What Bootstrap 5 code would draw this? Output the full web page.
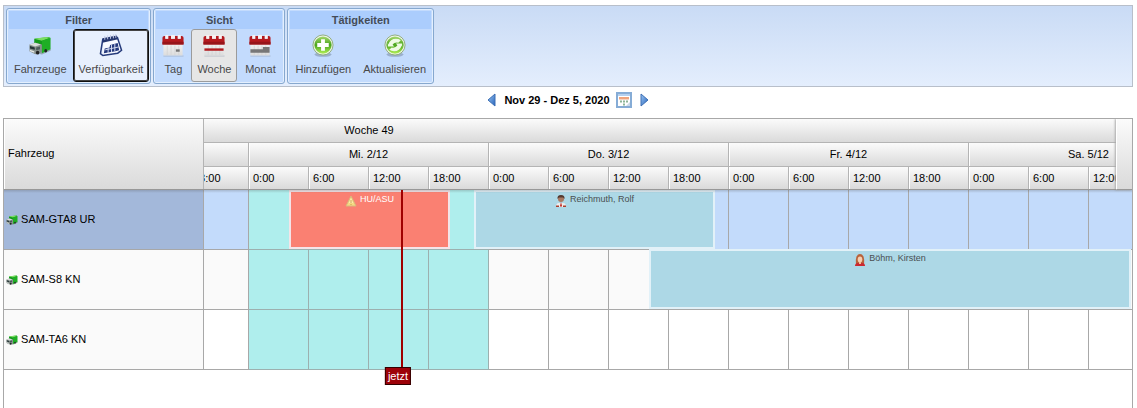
<!DOCTYPE html>
<html lang="de">
<head>
<meta charset="utf-8">
<meta name="viewport" content="width=device-width, initial-scale=1">
<title>Fahrzeugplanung</title>
<link href="https://cdn.jsdelivr.net/npm/bootstrap@5.3.0/dist/css/bootstrap.min.css" rel="stylesheet">
<style>
  :root { --line: #a8a8a8; --steel: #86a8cf; }
  body { font: 11px/16px "Liberation Sans", Arial, sans-serif; color: #000; background: #fff; }
  .page { padding: 0 4px 0 3px; }
  .defs { width: 0; height: 0; }
  .ribbon { background: linear-gradient(#c9dbf5, #e4eefd); border: 1px solid #b8bfca; margin-top: 5px; padding: 2px; gap: 2px; }
  .ribbon-group { border: 1px solid var(--steel); border-radius: 3px; background: #c3dbfd; box-shadow: inset 0 0 0 1px #e3effe; padding: 2px 1px 1px; height: 76px; }
  .ribbon-title { background: #abcdfd; color: #444c58; font-size: 11px; line-height: 18px; font-weight: bold; margin: 0 1px; text-align: center; }
  .tool { --bs-btn-color: #484848; --bs-btn-hover-color: #333; --bs-btn-border-radius: 3px; --bs-btn-font-size: 11px; --bs-btn-line-height: 16px; --bs-btn-padding-x: 5px; --bs-btn-padding-y: 4px; height: 53px; }
  .tool:last-child { min-width: 46px; }
  .tool svg { width: 24px; height: 24px; margin-bottom: 4px; }
  .tool.focused { background: #e8f0fd; border: 1px solid #101010; box-shadow: inset 0 0 0 1px #444; }
  .tool.chosen { background: #e6e6e6; border-color: #9b9b9b; }
  .period { height: 31px; gap: 6px; font-weight: bold; padding-bottom: 6px; }
  .period .btn { --bs-btn-padding-x: 0; --bs-btn-padding-y: 0; --bs-btn-border-width: 0; display: flex; }
  .planner { border: 1px solid var(--line); border-bottom: 0; }
  .planner table { border-collapse: separate; border-spacing: 0; table-layout: fixed; }
  .planner th { background: linear-gradient(#fbfbfb, #dadada); font-weight: normal; height: 24px; padding: 0 0 2px; text-align: center; border-right: 1px solid #b4b4b4; border-bottom: 1px solid #b4b4b4; box-shadow: inset 1px 0 #fff; }
  .planner td { height: 60px; border-right: 1px solid var(--line); border-bottom: 1px solid var(--line); padding: 0 0 2px; }
  .planner .hours th { height: 23px; padding: 0 0 0 4px; text-align: left; }
  .vehicles { width: 200px; }
  .planner .vehicles th { height: 71px; text-align: left; padding-left: 4px; }
  .planner .vehicles td { background: #fafafa; padding-left: 2px; }
  .planner .vehicles .current td { background: #a3b8da; }
  .vehicles svg { width: 12px; height: 12px; }
  .timeline { min-width: 0; }
  .hour-track { margin-left: -15px; width: 1020px; }
  .hour-track table { width: 1020px; }
  .current td { background: #c3dbfb; }
  .alternate td { background: #fafafa; }
  .hour-track td.today, .hour-track .current td.today { background: #afeeed; border-color: #9cb0af; }
  .head-shadow { top: 70px; left: 0; right: 0; height: 4px; background: linear-gradient(rgba(80,80,80,.32), rgba(80,80,80,0)); z-index: 2; }
  .booking { height: 60px; border: 2px solid #e2f1f8; background: #add8e6; color: #4a4f52; font-size: 9px; line-height: 12px; gap: 3px; padding-top: 1px; overflow: hidden; }
  .booking.service { background: #fa8072; color: #fff; border-color: #f4e4e8; }
  .booking svg { width: 12px; height: 12px; margin-top: 2px; }
  .lane-1 { top: 71px; height: 59px; } .lane-2 { top: 130px; }
  .now-line { top: 71px; width: 2px; height: 178px; background: #a00000; z-index: 3; }
  .now-tag { top: 248px; background: #9d0209; color: #fff; border: 1px solid #300; line-height: 16px; padding: 0 2px; transform: translateX(-50%); z-index: 3; }
  .gutter { top: 0; right: 0; width: 16px; height: 71px; background: linear-gradient(#fbfbfb, #dadada); border-left: 1px solid #fff; border-bottom: 1px solid #b4b4b4; box-shadow: -1px 0 2px #aaa; }
</style>
</head>
<body>
<svg class="defs position-absolute" aria-hidden="true">
  <defs>
    <linearGradient id="leaf" x1="0" y1="0" x2="0" y2="1"><stop offset="0" stop-color="#a6d86c"/><stop offset=".5" stop-color="#4aa51d"/><stop offset="1" stop-color="#b0ee55"/></linearGradient>
    <linearGradient id="blueArrow" x1="0" y1="0" x2="1" y2="1"><stop stop-color="#9cc6f3"/><stop offset="1" stop-color="#2563ba"/></linearGradient>
    <linearGradient id="paper" x1="0" y1="0" x2="0" y2="1"><stop stop-color="#f2f2f2"/><stop offset="1" stop-color="#dcdcdc"/></linearGradient>
  </defs>
  <symbol id="truck" viewBox="0 0 24 24">
    <path d="M2 18.500l12 3 9-4v-2L3 16z" fill="#69746d" opacity=".5"/>
    <path d="M6 5l16-2v12l-8 4-8-3z" fill="#139a1c"/><path d="M6 5l12-2 5 1-9 3z" fill="#7add62"/><path d="M14 7l9-3v12l-9 4z" fill="#1fae25"/>
    <path d="M1 11l6-2 7 2v8l-7 2-6-3z" fill="#87918d"/><path d="M1 11l6-2 6 2-6 2z" fill="#d9dedb"/><path d="M1.500 12.500l5 1.500v2.500l-5-1.500z" fill="#263638"/><path d="M8 14l4-1v3l-4 1z" fill="#4b5b5b"/><path d="M1.500 16.500l4.500 1.500v1.500L1.500 18z" fill="#e5e8e5"/>
    <ellipse cx="9.500" cy="19.500" rx="1.800" ry="2" fill="#222"/><ellipse cx="18" cy="17.500" rx="1.500" ry="1.800" fill="#222"/>
  </symbol>
  <symbol id="sheet" viewBox="0 0 24 24">
    <path d="M2 23h21" stroke="#8c98a8" opacity=".5"/><path d="M2 10h20v12.500H2z" fill="url(#paper)"/><path d="M6 12v10M10 12v10M14 12v10M18 12v10" stroke="#d0d0d0" stroke-width=".7"/>
    <path d="M1 4q0-2 2-2h1v3h3V2h3v3h4V2h3v3h3V2h1q2 0 2 2v7H1z" fill="#b51a1f"/><path d="M1 8h22v3H1z" fill="#97151a"/><path d="M4 1h3v4H4zM10 1h4v4h-4zM17 1h3v4h-3z" fill="#f8f1f1"/>
  </symbol>
  <symbol id="orb" viewBox="0 0 24 24">
    <ellipse cx="12" cy="21.500" rx="9" ry="2.300" fill="#71849b" opacity=".5"/><circle cx="12" cy="11.500" r="10.500" fill="#eef4e9" stroke="#8fab79"/><circle cx="12" cy="11.500" r="9" fill="url(#leaf)"/>
  </symbol>
</svg>

<div class="page min-vh-100 d-flex flex-column overflow-hidden">
  <div class="ribbon d-flex" role="toolbar" aria-label="Planung">
    <section class="ribbon-group">
      <h2 class="ribbon-title">Filter</h2>
      <div class="d-flex">
        <button type="button" class="btn tool d-flex flex-column align-items-center"><svg><use href="#truck"/></svg>Fahrzeuge</button>
        <button type="button" class="btn tool focused d-flex flex-column align-items-center"><svg viewBox="0 0 24 24"><path d="M4 6l14-4 4 15-4 4-14 1z" fill="#f8faff"/><path d="M3 4.500L18 1.500l1.500 4L3 9z" fill="#27386f"/><path d="M3.500 5L1 20.500l2.500 2L19 20l4-3-4.500-14" fill="none" stroke="#263b7b" stroke-width="1.600"/><path d="M5.500 2v4M8.500 1.500v4M11.500 1v4M14.500 .500v4M17 0v4" stroke="#c4cce5"/><path d="M11 11.500l8-2 1.500 7.500-4 1-12 2 1-5 5-1z" fill="#24387c"/><path d="M6 16.500l14-3M12.500 11v8M16 10v8M9 14v6" stroke="#dbe2f5"/></svg>Verfügbarkeit</button>
      </div>
    </section>
    <section class="ribbon-group">
      <h2 class="ribbon-title">Sicht</h2>
      <div class="d-flex">
        <button type="button" class="btn tool d-flex flex-column align-items-center"><svg viewBox="0 0 24 24"><use href="#sheet"/><path d="M15 16h4v2.500h-4z" fill="#777"/></svg>Tag</button>
        <button type="button" class="btn tool chosen d-flex flex-column align-items-center" aria-pressed="true"><svg viewBox="0 0 24 24"><use href="#sheet"/><path d="M2 15h20v2.500H2z" fill="#b11c20"/></svg>Woche</button>
        <button type="button" class="btn tool d-flex flex-column align-items-center"><svg viewBox="0 0 24 24"><use href="#sheet"/><path d="M2 16h13v-2.500h7v6H2z" fill="#777"/></svg>Monat</button>
      </div>
    </section>
    <section class="ribbon-group">
      <h2 class="ribbon-title">Tätigkeiten</h2>
      <div class="d-flex">
        <button type="button" class="btn tool d-flex flex-column align-items-center"><svg viewBox="0 0 24 24"><use href="#orb"/><path d="M10 5.500h4v4h4v4h-4v4h-4v-4H6v-4h4z" fill="#fff"/></svg>Hinzufügen</button>
        <button type="button" class="btn tool d-flex flex-column align-items-center"><svg viewBox="0 0 24 24"><use href="#orb"/><path d="M5 11q2-6 8-6 3 0 5 1.500L15.500 9q-4-1-6 2l1.500 2H4.500V8.500zM19 12q-2 6-8 6-3 0-5-1.500L8.500 14q4 1 6-2L13 10h6.500v4.500z" fill="#effbe3"/></svg>Aktualisieren</button>
      </div>
    </section>
  </div>

  <nav class="period d-flex align-items-center justify-content-center" aria-label="Zeitraum">
    <button type="button" class="btn" aria-label="Zurück"><svg width="12" height="14" viewBox="0 0 12 14"><path d="M9 1v12L2 7z" fill="url(#blueArrow)" stroke="#3c6eb4"/></svg></button>
    <span>Nov 29 - Dez 5, 2020</span>
    <button type="button" class="btn" aria-label="Datum wählen"><svg width="16" height="16" viewBox="0 0 16 16"><path d="M1 1h14v14H1z" fill="#fff" stroke="#86acd6" stroke-width="2"/><path d="M2 2h12v2H2z" fill="#b5d0ee"/><path d="M3 5h10v2.500H3z" fill="#f0a47c"/><path d="M4 8.500h2v2H4zM7 8.500h2v2H7zM10 8.500h2v2h-2zM7 11.500h2v2H7z" fill="#8db598"/><path d="M10 14l4-4v4z" fill="#cbd8e7"/></svg></button>
    <button type="button" class="btn" aria-label="Weiter"><svg width="12" height="14" viewBox="0 0 12 14"><path d="M3 1v12l7-6z" fill="url(#blueArrow)" stroke="#3c6eb4"/></svg></button>
  </nav>

  <main class="planner d-flex flex-grow-1 position-relative">
    <div class="flex-shrink-0">
      <table class="vehicles">
        <thead><tr><th scope="col">Fahrzeug</th></tr></thead>
        <tbody>
          <tr class="current"><td><svg><use href="#truck"/></svg> SAM-GTA8 UR</td></tr>
          <tr><td><svg><use href="#truck"/></svg> SAM-S8 KN</td></tr>
          <tr><td><svg><use href="#truck"/></svg> SAM-TA6 KN</td></tr>
        </tbody>
      </table>
    </div>
    <div class="timeline flex-grow-1 overflow-hidden position-relative">
      <div class="hour-track position-relative">
        <table>
          <colgroup><col span="17"></colgroup>
          <thead>
            <tr><th colspan="6" class="border-end-0">Woche 49</th><th colspan="11" class="shadow-none"></th></tr>
            <tr><th></th><th colspan="4">Mi. 2/12</th><th colspan="4">Do. 3/12</th><th colspan="4">Fr. 4/12</th><th colspan="4">Sa. 5/12</th></tr>
            <tr class="hours"><th>18:00</th><th>0:00</th><th>6:00</th><th>12:00</th><th>18:00</th><th>0:00</th><th>6:00</th><th>12:00</th><th>18:00</th><th>0:00</th><th>6:00</th><th>12:00</th><th>18:00</th><th>0:00</th><th>6:00</th><th>12:00</th><th></th></tr>
          </thead>
          <tbody>
            <tr class="current"><td></td><td class="today"></td><td class="today"></td><td class="today"></td><td class="today"></td><td></td><td></td><td></td><td></td><td></td><td></td><td></td><td></td><td></td><td></td><td></td><td></td></tr>
            <tr class="alternate"><td></td><td class="today"></td><td class="today"></td><td class="today"></td><td class="today"></td><td></td><td></td><td></td><td></td><td></td><td></td><td></td><td></td><td></td><td></td><td></td><td></td></tr>
            <tr><td></td><td class="today"></td><td class="today"></td><td class="today"></td><td class="today"></td><td></td><td></td><td></td><td></td><td></td><td></td><td></td><td></td><td></td><td></td><td></td><td></td></tr>
          </tbody>
        </table>
        <div class="booking service lane-1 position-absolute d-flex justify-content-center" style="left:100px;width:161px"><svg viewBox="0 0 12 12"><path d="M6 1l5 10H1z" fill="#f5d983" stroke="#d8b87c"/><path d="M6 3l2 5H4z" fill="#fff0b7"/><path d="M6 5v3M6 9v1" stroke="#c9a052"/></svg><span>HU/ASU</span></div>
        <div class="booking lane-1 position-absolute d-flex justify-content-center" style="left:285px;width:241px"><svg viewBox="0 0 12 12"><path d="M1 12q0-4 3-4h4q3 0 3 4z" fill="#eee"/><path d="M1 10.500h3V12H1zM8 10.500h3V12H8z" fill="#a8402f"/><circle cx="6" cy="4" r="3" fill="#a97860"/><path d="M2.500 4Q2 0 6 0t3.500 4L8 2.500H4z" fill="#54392f"/><path d="M6 7l1 4-1 1-1-1z" fill="#c32620"/></svg><span>Reichmuth, Rolf</span></div>
        <div class="booking lane-2 position-absolute d-flex justify-content-center" style="left:460px;width:482px"><svg viewBox="0 0 12 12"><path d="M2 10Q1 0 6 0t4 10z" fill="#b9623a"/><path d="M1 12q0-3 3-3h4q3 0 3 3z" fill="#cb2931"/><ellipse cx="6" cy="5.500" rx="2.300" ry="3" fill="#f6ceb0"/><path d="M5 8h2v2H5z" fill="#f0bd9b"/></svg><span>Böhm, Kirsten</span></div>
        <div class="now-line position-absolute" style="left:212px"></div>
        <div class="now-tag position-absolute" style="left:209px">jetzt</div>
      </div>
      <div class="gutter position-absolute"></div>
    </div>
    <div class="head-shadow position-absolute"></div>
  </main>
</div>
<script src="https://cdn.jsdelivr.net/npm/bootstrap@5.3.0/dist/js/bootstrap.bundle.min.js"></script>
</body>
</html>
